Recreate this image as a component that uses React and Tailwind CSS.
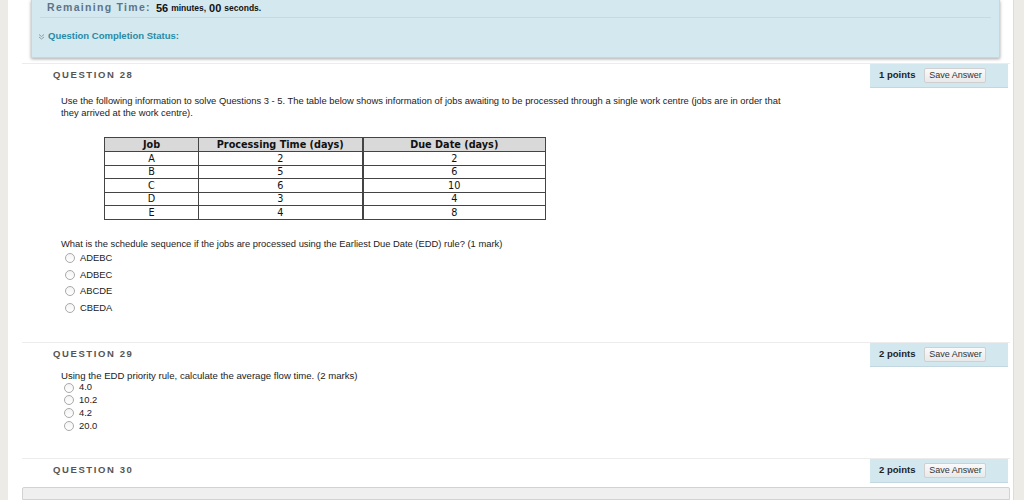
import React from "react";

const font = { fontFamily: '"Liberation Sans", Arial, sans-serif' };
const tableFont = { fontFamily: '"DejaVu Sans", Tahoma, Verdana, sans-serif' };

function Radio() {
  return (
    <span className="inline-block w-[10px] h-[10px] rounded-full border border-[#a9a9a9] bg-gradient-to-b from-[#f4f4f4] to-white shrink-0" />
  );
}

function PointsBox({ pts }) {
  return (
    <div className="w-[138px] h-[24px] bg-[#d3e7ee] border-b border-[#c2d7df] flex items-center pl-[9px] gap-[9px]">
      <span className="text-[9.5px] font-bold text-[#222]">{pts} points</span>
      <span className="h-[15px] w-[62px] flex items-center justify-center bg-gradient-to-b from-[#fafafa] to-[#e9e9e9] border border-[#d0d0d0] rounded-[2px] text-[9px] text-[#333]">
        Save Answer
      </span>
    </div>
  );
}

function QHeader({ n, pts }) {
  return (
    <div className="flex justify-between items-start border-t border-[#ececec]">
      <div className="pl-[31px] pt-[4px] text-[9.5px] font-bold tracking-[1.6px] text-[#555]">QUESTION {n}</div>
      <div className="mr-[2px]"><PointsBox pts={pts} /></div>
    </div>
  );
}

const rows = [
  ["A", "2", "2"],
  ["B", "5", "6"],
  ["C", "6", "10"],
  ["D", "3", "4"],
  ["E", "4", "8"],
];

export default function App() {
  return (
    <div className="w-[1024px] h-[500px] bg-[#ecebe6] flex overflow-hidden" style={font}>
      <div className="w-[8px] shrink-0" />
      <div className="w-[1006px] shrink-0 bg-white border-r border-[#dcdcd8] h-full flex flex-col">
        {/* top status panel */}
        <div className="ml-[23px] w-[969px] h-[58px] bg-[#d3e8ef] shadow-[0_1px_3px_rgba(0,0,0,0.35)] border border-[#c3d9e1] border-t-0 flex flex-col">
          <div className="h-[18px] mx-[8px] border-b border-[#c4dbe3] flex items-center pl-[7px] pb-[1px]">
            <span className="text-[10.5px] font-bold tracking-[1.3px] text-[#5d7488]">Remaining Time:</span>
            <span className="ml-[5px] text-[11px] font-bold text-[#111]">56</span>
            <span className="ml-[3px] text-[8.5px] font-bold text-[#111]">minutes,</span>
            <span className="ml-[3px] text-[11px] font-bold text-[#111]">00</span>
            <span className="ml-[3px] text-[8.5px] font-bold text-[#111]">seconds.</span>
          </div>
          <div className="flex items-center mt-[11px] pl-[6px]">
            <svg width="7" height="7" viewBox="0 0 7 7" className="mr-[3px]">
              <path d="M1 1.5 L3.5 3.5 L6 1.5 M1 4 L3.5 6 L6 4" stroke="#8aa0ab" strokeWidth="1" fill="none" />
            </svg>
            <span className="text-[9.5px] font-bold text-[#2a8ba5]">Question Completion Status:</span>
          </div>
        </div>

        {/* Question 28 */}
        <div className="mt-[5px] ml-[14px] w-[988px] h-[279px] flex flex-col">
          <QHeader n="28" pts="1" />
          <div className="pl-[39px] mt-[7px] text-[9.4px] leading-[12px] text-[#222] whitespace-nowrap">
            Use the following information to solve Questions 3 - 5. The table below shows information of jobs awaiting to be processed through a single work centre (jobs are in order that
            <br />
            they arrived at the work centre).
          </div>
          <div className="ml-[82px] mt-[18px]" style={tableFont}>
            <table className="border-collapse border border-[#444] text-[9.7px] text-[#111]" style={{ width: 442 }}>
              <thead>
                <tr className="bg-[#d9d9d9] h-[14px]">
                  <th className="w-[94px] border border-[#444] font-bold leading-[12px] p-0">Job</th>
                  <th className="w-[164px] border border-[#444] border-r-[2px] font-bold leading-[12px] p-0">Processing Time (days)</th>
                  <th className="border border-[#444] font-bold leading-[12px] p-0">Due Date (days)</th>
                </tr>
              </thead>
              <tbody>
                {rows.map((r) => (
                  <tr key={r[0]} className="h-[13.5px]">
                    <td className="border border-[#444] text-center leading-[11px] p-0">{r[0]}</td>
                    <td className="border border-[#444] border-r-[2px] text-center leading-[11px] p-0">{r[1]}</td>
                    <td className="border border-[#444] text-center leading-[11px] p-0">{r[2]}</td>
                  </tr>
                ))}
              </tbody>
            </table>
          </div>
          <div className="pl-[39px] mt-[17px] text-[9.4px] text-[#222] whitespace-nowrap">
            What is the schedule sequence if the jobs are processed using the Earliest Due Date (EDD) rule? (1 mark)
          </div>
          <div className="pl-[43px] mt-[2px] flex flex-col gap-[5px]">
            {["ADEBC", "ADBEC", "ABCDE", "CBEDA"].map((o) => (
              <div key={o} className="flex items-center h-[11.5px] gap-[5px] text-[9.4px] text-[#222]">
                <Radio />
                <span>{o}</span>
              </div>
            ))}
          </div>
        </div>

        {/* Question 29 */}
        <div className="ml-[14px] w-[988px] h-[116px] flex flex-col">
          <QHeader n="29" pts="2" />
          <div className="pl-[39px] mt-[3px] text-[9.6px] leading-[11px] text-[#222] whitespace-nowrap">
            Using the EDD priority rule, calculate the average flow time. (2 marks)
          </div>
          <div className="pl-[42px] mt-[1px] flex flex-col gap-[1.7px]">
            {["4.0", "10.2", "4.2", "20.0"].map((o) => (
              <div key={o} className="flex items-center h-[11px] gap-[5px] text-[9.4px] text-[#222]">
                <Radio />
                <span>{o}</span>
              </div>
            ))}
          </div>
        </div>

        {/* Question 30 */}
        <div className="ml-[14px] w-[988px] h-[29px] flex flex-col">
          <QHeader n="30" pts="2" />
        </div>

        <div className="ml-[14px] w-[988px] flex-1 bg-[#efefef] border border-[#d2d2d2] rounded-t-[2px]" />
      </div>
    </div>
  );
}
